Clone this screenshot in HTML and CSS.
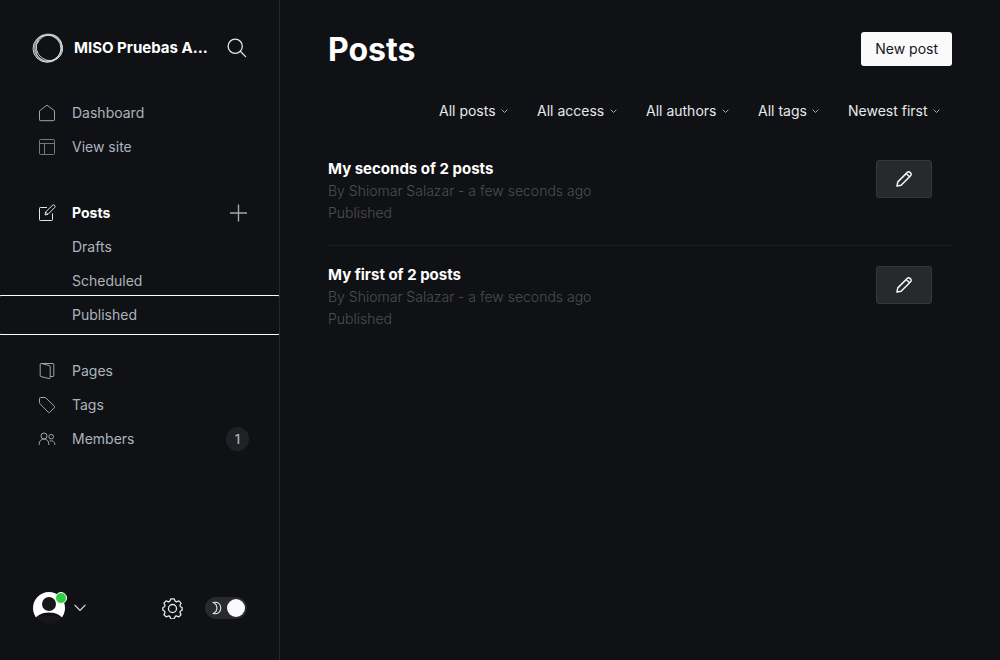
FILE: index.html
```html
<!DOCTYPE html>
<html lang="en">
<head>
<meta charset="utf-8">
<title>Posts</title>
<link rel="stylesheet" href="styles.css">
</head>
<body>
<div class="app">
  <aside class="sidebar">
    <header class="site">
      <svg class="site-logo" viewBox="0 0 32 32" fill="none" stroke="#d4d5d7" aria-hidden="true">
        <circle cx="16" cy="16" r="13.500" stroke-width="1.800" stroke="#8e9093"/>
        <ellipse cx="15" cy="16.600" rx="14" ry="13.600" stroke-width="1"/>
        <ellipse cx="17" cy="15" rx="13.600" ry="12.600" stroke-width=".9" transform="rotate(35 16 16)"/>
        <ellipse cx="16.600" cy="16.600" rx="14" ry="12.400" stroke-width=".8" transform="rotate(-50 16 16)"/>
      </svg>
      <span class="site-name">MISO Pruebas A…</span>
      <button class="icon-button" type="button" aria-label="Search">
        <svg class="icon-search" viewBox="0 0 20 20" fill="none" stroke="#e6e7e8" stroke-width="1.3" stroke-linecap="round"><circle cx="8.2" cy="8.2" r="7.1"/><path d="M13.3 13.3l5.3 5.3"/></svg>
      </button>
    </header>
    <nav class="nav">
      <ul class="nav-group">
        <li><a class="nav-link" href="#"><svg class="nav-icon" viewBox="0 0 18 18"><path d="M1.5 6.8L9 1.2l7.5 5.6v9a.9.9 0 0 1-.9.9H2.4a.9.9 0 0 1-.9-.9z"/></svg>Dashboard</a></li>
        <li><a class="nav-link" href="#"><svg class="nav-icon nav-icon-dim" viewBox="0 0 18 18"><rect x="1.500" y="1.500" width="15" height="15" rx="1"/><path d="M1.5 5.500h15M6.500 5.500v11"/></svg>View site</a></li>
      </ul>
      <ul class="nav-group">
        <li class="nav-row"><a class="nav-link nav-link-current" href="#"><svg class="nav-icon" viewBox="0 0 18 18"><path d="M9 3.5H2.3a.8.8 0 0 0-.8.8v11.4a.8.8 0 0 0 .8.8h11.4a.8.8 0 0 0 .8-.8V9.5"/><path d="M7 11l.6-3 6.8-6.6a1.5 1.5 0 0 1 2.2 2.2L10 10.3zM7.6 8L10 10.3"/></svg>Posts</a>
          <button class="icon-button" type="button" aria-label="New post"><svg class="icon-plus" viewBox="0 0 20 18" stroke="#a5a7aa" stroke-width="1.4"><path d="M9.500 .5v17M1 9h17"/></svg></button></li>
        <li><a class="nav-link nav-sub" href="#">Drafts</a></li>
        <li><a class="nav-link nav-sub" href="#">Scheduled</a></li>
        <li><a class="nav-link nav-sub nav-focused" href="#">Published</a></li>
      </ul>
      <ul class="nav-group">
        <li><a class="nav-link" href="#"><svg class="nav-icon" viewBox="0 0 18 18"><path d="M5 1.5h10a.8.8 0 0 1 .8.8v11.4a.8.8 0 0 1-.8.8h-2.8"/><path d="M3 1.5h.5l7.8 2.1a1.1 1.1 0 0 1 .9 1.1v11.2c0 .5-.5.8-.9.7L3 14.6a1 1 0 0 1-.8-1V2.3c0-.5.3-.8.8-.8h3"/></svg>Pages</a></li>
        <li><a class="nav-link" href="#"><svg class="nav-icon" viewBox="0 0 18 18"><path d="M1.5 2.4v4.4c0 .3.1.6.3.8l8.6 8.7a1 1 0 0 0 1.4 0l4.6-4.6a1 1 0 0 0 0-1.4L7.8 1.8a1 1 0 0 0-.8-.3H2.4a.9.9 0 0 0-.9.9z"/></svg>Tags</a></li>
        <li class="nav-row"><a class="nav-link" href="#"><svg class="nav-icon" viewBox="0 0 18 18"><circle cx="6" cy="6" r="3"/><circle cx="13.2" cy="6.7" r="2.3"/><path d="M1.2 15v-1.2a4.8 4.8 0 0 1 9.6 0V15M11.6 11.1a3.6 3.6 0 0 1 5.2 3.2V15"/></svg>Members</a><span class="count">1</span></li>
      </ul>
    </nav>
    <footer class="account">
      <button class="icon-button profile" type="button" aria-label="Account menu">
        <span class="avatar">
          <svg class="avatar-image" viewBox="0 0 32 32"><defs><clipPath id="round"><circle cx="16" cy="16" r="16"/></clipPath></defs><g clip-path="url(#round)"><path fill="#15171a" d="M0 24h32v8H0z"/><path fill="#fff" d="M0 0h32v29.500C28.500 23.500 23.500 20.500 16 20.500S3.500 23.500 0 29.500z"/><circle cx="16" cy="12" r="7" fill="#15171a"/></g></svg>
          <span class="status"></span>
        </span>
        <svg class="icon-down" viewBox="0 0 12 8" fill="none" stroke="#e6e7e8" stroke-width="1.1" stroke-linecap="round"><path d="M.8 1.2L6 6.4l5.2-5.2"/></svg>
      </button>
      <button class="icon-button settings" type="button" aria-label="Settings">
        <svg class="icon-gear" viewBox="0 0 24 24" fill="none" stroke="#e6e7e8" stroke-width="1.5" stroke-linejoin="round"><circle cx="12" cy="12" r="4.6"/><path d="M9.200 3.200L10.200 1h3.600l1 2.200a1.800 1.800 0 0 0 2.300.9l2.200-.8 1.400 1.400 1 1.200-.9 2.100a1.800 1.800 0 0 0 .9 2.300l1.300.6v3l-1.300.7a1.800 1.800 0 0 0-.9 2.300l.9 2.200-2.400 2.500-2.200-.8a1.800 1.800 0 0 0-2.300.9l-1 2.200h-3.600l-1-2.200a1.800 1.800 0 0 0-2.300-.9l-2.200.8-2.400-2.500.9-2.200a1.800 1.800 0 0 0-.9-2.300L1 13.900v-3l1.300-.6a1.800 1.800 0 0 0 .9-2.300l-.9-2.100 2.400-2.600 2.200.8a1.800 1.800 0 0 0 2.300-.9z"/></svg>
      </button>
      <label class="toggle">
        <input class="toggle-input" type="checkbox" checked aria-label="Night mode">
        <svg class="icon-moon" viewBox="0 0 10 14" fill="none" stroke="#e6e7e8" stroke-width="1.1" stroke-linejoin="round"><path d="M1 1.500C6 .3 8.800 3.200 8.800 7s-2.800 6.700-7.800 5.500C6.200 10.500 6.200 3.500 1 1.500z"/></svg>
        <span class="toggle-knob"></span>
      </label>
    </footer>
  </aside>
  <main class="main">
    <header class="page-header">
      <h1 class="page-title">Posts</h1>
      <button class="new-post" type="button">New post</button>
    </header>
    <div class="filters">
      <span class="filter"><select class="filter-select" aria-label="Type"><option>All posts</option></select><svg class="filter-arrow" viewBox="0 0 7 5"><path d="M.7.7l2.800 2.800L6.300.7"/></svg></span>
      <span class="filter"><select class="filter-select" aria-label="Access"><option>All access</option></select><svg class="filter-arrow" viewBox="0 0 7 5"><path d="M.7.7l2.800 2.800L6.300.7"/></svg></span>
      <span class="filter"><select class="filter-select" aria-label="Author"><option>All authors</option></select><svg class="filter-arrow" viewBox="0 0 7 5"><path d="M.7.7l2.800 2.800L6.300.7"/></svg></span>
      <span class="filter"><select class="filter-select" aria-label="Tag"><option>All tags</option></select><svg class="filter-arrow" viewBox="0 0 7 5"><path d="M.7.7l2.800 2.800L6.300.7"/></svg></span>
      <span class="filter"><select class="filter-select" aria-label="Order"><option>Newest first</option></select><svg class="filter-arrow" viewBox="0 0 7 5"><path d="M.7.7l2.800 2.800L6.300.7"/></svg></span>
    </div>
    <ol class="posts">
      <li class="post">
        <div class="post-text">
          <h2 class="post-title">My seconds of 2 posts</h2>
          <p class="post-meta">By Shiomar Salazar - a few seconds ago</p>
          <p class="post-meta">Published</p>
        </div>
        <button class="edit" type="button" aria-label="Edit"><svg class="icon-pencil" viewBox="0 0 16 16"><path d="M.9 15.100l.9-4.200L11.300 1.400a1.900 1.900 0 0 1 2.700 0l.6.6a1.900 1.900 0 0 1 0 2.700L5.100 14.200zM10.200 2.500l3.300 3.300"/></svg></button>
      </li>
      <li class="post">
        <div class="post-text">
          <h2 class="post-title">My first of 2 posts</h2>
          <p class="post-meta">By Shiomar Salazar - a few seconds ago</p>
          <p class="post-meta">Published</p>
        </div>
        <button class="edit" type="button" aria-label="Edit"><svg class="icon-pencil" viewBox="0 0 16 16"><path d="M.9 15.100l.9-4.200L11.300 1.400a1.900 1.900 0 0 1 2.700 0l.6.6a1.900 1.900 0 0 1 0 2.700L5.100 14.200zM10.200 2.500l3.300 3.300"/></svg></button>
      </li>
    </ol>
  </main>
</div>
</body>
</html>
```
FILE: styles.css
```css
* { box-sizing: border-box; }
body {
  margin: 0;
  background: #101114;
  color: #fff;
  font: 14px/22px Inter, "Liberation Sans", sans-serif;
}
h1, h2, p, ul, ol { margin: 0; padding: 0; list-style: none; }
button, select { font: inherit; color: inherit; }
svg { display: block; flex: none; }

.app { display: flex; min-height: 100vh; }

.sidebar {
  display: flex;
  flex-direction: column;
  flex: none;
  width: 280px;
  border-right: 1px solid #25272b;
}
.site {
  display: flex;
  align-items: center;
  gap: 10px;
  padding: 32px 32px 0;
}
.site-logo { width: 32px; height: 32px; }
.site-name {
  flex: 1;
  min-width: 0;
  overflow: hidden;
  white-space: nowrap;
  text-overflow: ellipsis;
  font-size: 15px;
  font-weight: 700;
}
.icon-button {
  display: flex;
  align-items: center;
  padding: 0;
  border: 0;
  background: none;
}
.icon-search { width: 20px; height: 20px; }

.nav {
  display: flex;
  flex-direction: column;
  margin-top: 32px;
  overflow: hidden;
}
.nav-group + .nav-group { margin-top: 32px; }
.nav-group:last-child { margin-top: 22px; }
.nav-row { display: flex; align-items: center; padding-right: 30px; }
.nav-link {
  display: flex;
  flex: 1;
  align-items: center;
  gap: 16px;
  height: 34px;
  padding: 0 32px 0 38px;
  color: #abb4be;
  text-decoration: none;
}
.nav-sub { padding-left: 72px; }
.nav-link-current { color: #fff; font-weight: 700; }
.nav-focused { outline: 1px solid #fff; outline-offset: 2px; border-radius: 1px; }
.nav-icon { width: 18px; height: 18px; fill: none; stroke: #a0a3a8; stroke-linejoin: round; }
.nav-icon-dim { stroke: #74777c; }
.nav-link-current .nav-icon { stroke: #e6e7e8; }
.icon-plus { width: 20px; height: 18px; }
.count {
  width: 23px;
  height: 24px;
  border-radius: 12px;
  background: #1f2125;
  color: #abb4be;
  font-size: 13px;
  font-weight: 500;
  line-height: 24px;
  text-align: center;
}

.account {
  display: flex;
  align-items: center;
  margin-top: auto;
  padding: 0 32px 36px 33px;
}
.profile { gap: 9px; }
.avatar { position: relative; }
.avatar-image { width: 32px; height: 32px; }
.status {
  position: absolute;
  top: 0;
  right: -2px;
  width: 12px;
  height: 12px;
  border: 1px solid #fff;
  border-radius: 50%;
  background: #30cf43;
}
.icon-down { width: 12px; height: 8px; }
.settings { margin-left: auto; }
.icon-gear { width: 21px; height: 21px; }
.toggle {
  position: relative;
  display: flex;
  align-items: center;
  justify-content: space-between;
  width: 42px;
  height: 22px;
  margin-left: 22px;
  padding: 0 2px 0 7px;
  border-radius: 11px;
  background: #282a2d;
}
.toggle-input { position: absolute; inset: 0; width: 100%; height: 100%; margin: 0; opacity: 0; }
.icon-moon { width: 10px; height: 14px; }
.toggle-knob { width: 18px; height: 18px; border-radius: 50%; background: #fafafa; }

.main { flex: 1; min-width: 0; padding: 32px 48px; }
.page-header { display: flex; align-items: center; justify-content: space-between; }
.page-title { font-size: 32px; line-height: 36px; font-weight: 700; }
.new-post {
  height: 34px;
  padding: 0 14px;
  border: 0;
  border-radius: 3px;
  background: #fafafa;
  color: #15171a;
}
.page-header { align-items: flex-start; }
.filters {
  display: flex;
  justify-content: flex-end;
  gap: 29px;
  margin-top: 32px;
  padding-right: 12px;
}
.filter { display: flex; align-items: center; gap: 5px; }
.filter-select {
  padding: 0;
  border: 0;
  background: none;
  color: #e6e9ec;
  appearance: none;
}
.filter-arrow { width: 7px; height: 5px; fill: none; stroke: #a6a9ae; }

.posts { margin-top: 18px; }
.post {
  display: flex;
  justify-content: space-between;
  align-items: flex-start;
  padding: 18px 20px 21px 0;
}
.post + .post { border-top: 1px solid #1a1c20; }
.post-title { font-size: 15px; line-height: 22px; font-weight: 700; }
.post-meta { color: #4c4e52; font-weight: 300; }
.edit {
  display: grid;
  place-items: center;
  width: 56px;
  height: 38px;
  margin-top: 2px;
  padding: 0;
  border: 1px solid #35373b;
  border-radius: 3px;
  background: #27292c;
}
.icon-pencil { width: 16px; height: 16px; fill: none; stroke: #f4f4f5; stroke-width: 1.5; stroke-linejoin: round; }
```
